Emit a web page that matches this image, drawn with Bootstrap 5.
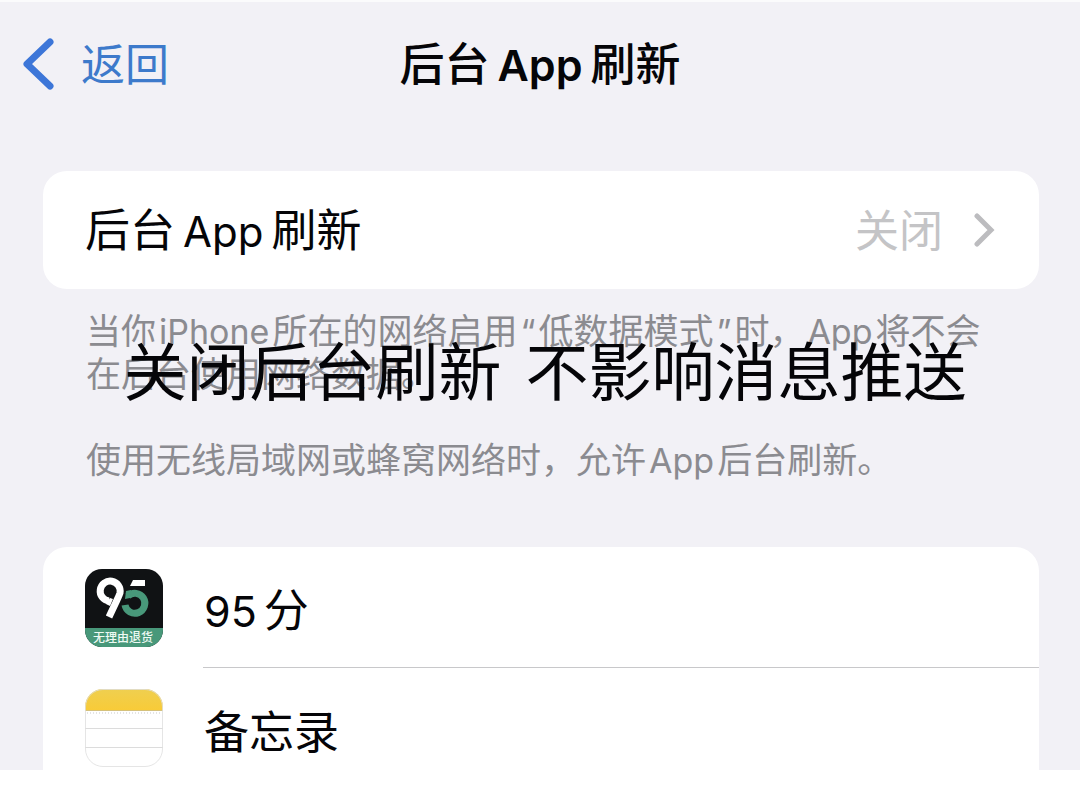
<!DOCTYPE html>
<html lang="zh-CN">
<head>
<meta charset="utf-8">
<meta name="viewport" content="width=device-width, initial-scale=1">
<title>后台App刷新</title>
<link href="https://cdn.jsdelivr.net/npm/bootstrap@5.3.0/dist/css/bootstrap.min.css" rel="stylesheet">
<style>
  body { font-family: Inter, "Noto Sans CJK SC", sans-serif; background: #fff; color: #050508; }
  .screen { background: #f2f1f6; border-top: 2px solid #fbfbfc; }
  .topbar { display: grid; grid-template-columns: 1fr auto 1fr; height: 126px; margin-bottom: 43px; padding: 0 23px; }
  .back { color: #3d7acb; font-size: 44px; line-height: 60px; gap: 26px; }
  .page-title { font-size: 45px; line-height: 60px; font-weight: 500; }
  .latin { font-size: 42px; margin: 0 8px; }
  .page-title .latin { font-size: 43px; font-weight: 600; }
  .group { margin: 0 41px 0 43px; }
  .panel { background: #fff; border-radius: 24px; }
  .setting { height: 118px; padding: 2px 44px 0 42px; font-size: 45px; line-height: 60px; }
  .state { color: #c4c4c6; gap: 30px; font-size: 44px; }
  .notes { position: relative; padding: 21px 42px 0 43px; color: #8b8b90; font-size: 35px; line-height: 43px; height: 258px; }
  .notes .latin { font-size: 34px; margin: 0 3px; }
  .notes p { margin-bottom: 43px; }
  .caption-over { position: absolute; top: 38px; left: 0; right: 0; gap: 24px; padding-left: 8px; color: #050508; font-size: 63px; line-height: 90px; }
  .apps { border-radius: 24px 24px 0 0; padding-left: 42px; }
  .app-row { gap: 40px; font-size: 45px; line-height: 60px; }
  .app-row svg { width: 78px; height: 78px; }
  .app-name { height: 121px; padding: 8px 0 0 1px; }
  .last-row { height: 102px; padding-top: 21px; }
  .last-row .app-name { height: 81px; padding-top: 6px; }
  .ruled { border-bottom: 1px solid #c8c8ca; }
  .digits { font-size: 43px; margin-right: 7px; }
</style>
</head>
<body>
<main class="screen">
  <header class="topbar align-items-center">
    <a href="#" class="back d-flex align-items-center text-decoration-none">
      <svg width="32" height="54" viewBox="0 0 32 54" fill="none" stroke="#3d76d8" stroke-width="7" stroke-linecap="round" stroke-linejoin="round" aria-hidden="true"><path d="M27 4 4 26l23 22"/></svg>
      <span>返回</span>
    </a>
    <h1 class="page-title m-0">后台<span class="latin">App</span>刷新</h1>
  </header>

  <section class="group">
    <a href="#" class="panel setting d-flex align-items-center justify-content-between text-reset text-decoration-none">
      <span>后台<span class="latin">App</span>刷新</span>
      <span class="state d-flex align-items-center">关闭
        <svg width="22" height="36" viewBox="0 0 22 36" fill="none" stroke="#bcbcbf" stroke-width="5" stroke-linecap="round" stroke-linejoin="miter" aria-hidden="true"><path d="m4 3 14 14L4 31"/></svg>
      </span>
    </a>
    <div class="notes">
      <p>当你<span class="latin">iPhone</span>所在的网络启用<span class="latin">“</span>低数据模式<span class="latin">”</span>时，<span class="latin">App</span>将不会<br>在后台使用网络数据。</p>
      <p>使用无线局域网或蜂窝网络时，允许<span class="latin">App</span>后台刷新。</p>
      <div class="caption-over d-flex justify-content-center text-nowrap"><span>关闭后台刷新</span><span>不影响消息推送</span></div>
    </div>
  </section>

  <section class="group panel apps">
    <div class="app-row d-flex align-items-center">
      <svg viewBox="0 0 78 78" role="img" aria-label="95分">
        <defs><clipPath id="tile"><rect width="78" height="78" rx="17"/></clipPath></defs>
        <g clip-path="url(#tile)">
          <path fill="#101214" d="M0 0h78v78H0z"/>
          <path fill="#48987a" d="M0 59h78v19H0z"/>
          <path fill="none" stroke="#48987a" stroke-width="7" d="M43 27a10 10 0 1 1-3 9"/>
          <path fill="#48987a" d="m41 22 5-1-1 8-5 1z"/>
          <path fill="none" stroke="#fff" stroke-width="7" d="M24 32a10 10 0 1 1 11-8q-1 3-3 7l-8 17"/>
          <path fill="#fff" d="m21 35 4-6 3 1-3 7z"/>
          <path fill="#fff" d="M48 11h12v6H45z"/>
        </g>
        <text x="38" y="73" text-anchor="middle" font-size="12" font-weight="500" fill="#eefaf4">无理由退货</text>
      </svg>
      <div class="app-name ruled flex-grow-1 d-flex align-items-center"><span class="digits">95</span>分</div>
    </div>
    <div class="app-row last-row d-flex align-items-start">
      <svg viewBox="0 0 78 78" role="img" aria-label="备忘录">
        <defs>
          <linearGradient id="gold" x2="0" y2="1"><stop stop-color="#efcf50"/><stop offset="1" stop-color="#f8cb38"/></linearGradient>
          <clipPath id="sheet"><rect width="78" height="78" rx="18"/></clipPath>
        </defs>
        <g clip-path="url(#sheet)">
          <path fill="#fff" d="M0 0h78v78H0z"/>
          <path fill="url(#gold)" d="M0 0h78v21H0z"/>
          <path stroke="#d5c17b" d="M0 21.500h78"/>
          <path stroke="#c9c9c9" stroke-dasharray="1 2" d="M2 24h74"/>
          <path stroke="#dcdcdc" d="M0 39.500h78M0 58.500h78"/>
        </g>
        <rect x=".5" y=".5" width="77" height="77" rx="17.500" fill="none" stroke="#dedede" stroke-opacity=".8"/>
      </svg>
      <div class="app-name flex-grow-1 d-flex align-items-center">备忘录</div>
    </div>
  </section>
</main>
<script src="https://cdn.jsdelivr.net/npm/bootstrap@5.3.0/dist/js/bootstrap.bundle.min.js"></script>
</body>
</html>
